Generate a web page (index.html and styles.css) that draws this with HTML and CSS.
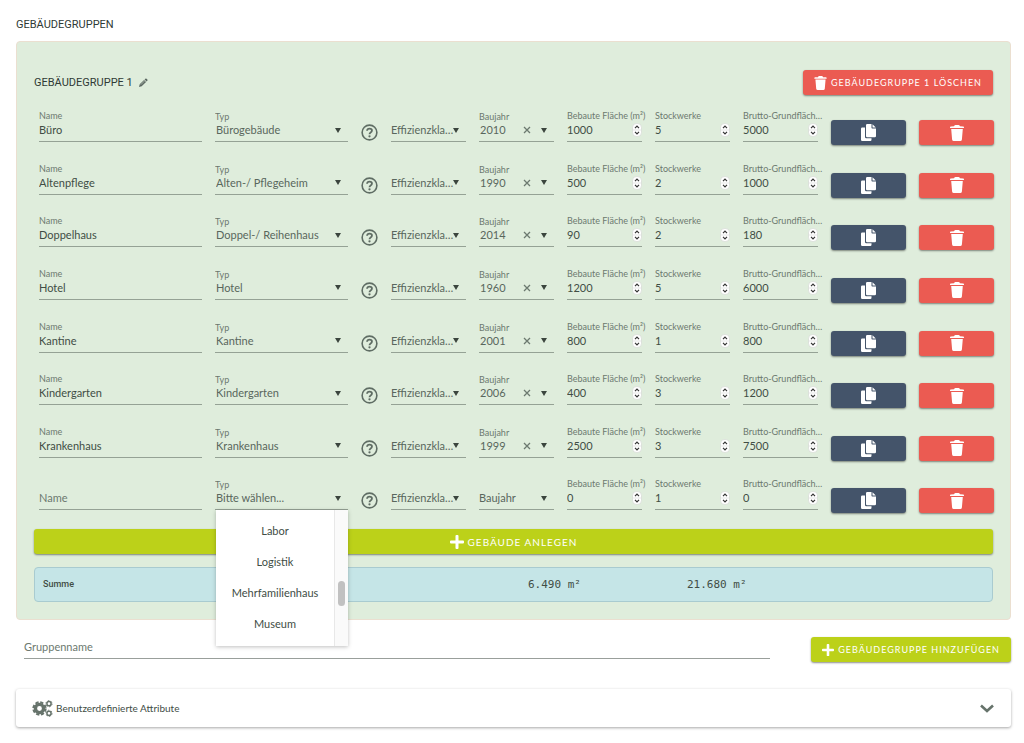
FILE: index.html
```html
<!DOCTYPE html>
<html lang="de">
<head>
  <meta charset="utf-8">
  <meta name="viewport" content="width=device-width, initial-scale=1">
  <title>Gebäudegruppen</title>
  <link rel="stylesheet" href="styles.css">
</head>
<body>
  <svg class="sprite" aria-hidden="true">
    <symbol id="i-trash" viewBox="0 0 14 16"><path d="M0 2.4Q0 1.6.8 1.5L4 1.3Q4.600 0 5.500 0H8.500Q9.400 0 10 1.300L13.200 1.500Q14 1.600 14 2.400V3H0ZM1.200 4H12.800L11.900 14.500Q11.700 16 10.300 16H3.700Q2.300 16 2.100 14.500Z"/></symbol>
    <symbol id="i-copy" viewBox="0 0 15 17"><path d="M6.200 0H10.500V3.800Q10.500 4.500 11.200 4.500H15V12Q15 13.200 13.800 13.200H6.200Q5 13.200 5 12V1.200Q5 0 6.200 0ZM11.500.2L14.800 3.500H11.500ZM1.200 3.600H4V13Q4 14.300 5.300 14.300H10.500V15.800Q10.500 17 9.300 17H1.200Q0 17 0 15.800V4.800Q0 3.600 1.200 3.600Z"/></symbol>
    <symbol id="i-plus" viewBox="0 0 14 14"><path d="M5.500 1Q5.500 0 6.400 0H7.600Q8.500 0 8.500 1V5.500H13Q14 5.500 14 6.400V7.600Q14 8.500 13 8.500H8.500V13Q8.500 14 7.600 14H6.400Q5.500 14 5.500 13V8.500H1Q0 8.500 0 7.600V6.400Q0 5.500 1 5.500H5.500Z"/></symbol>
    <symbol id="i-pencil" viewBox="0 0 10 10"><path d="M7 .8Q7.700.1 8.400.7L9.300 1.600Q9.900 2.300 9.200 3L8.400 3.800 6.200 1.600ZM5.600 2.200L7.800 4.400 3 9.200 0 10 .8 7Z"/><path d="M2 7.400L6 3.400" fill="none" stroke="#dfeddc" stroke-width=".6"/></symbol>
    <symbol id="i-help" viewBox="0 0 18 18"><g fill="none" stroke="currentColor" stroke-width="1.700"><circle cx="9" cy="9" r="7.800"/><path d="M6.400 7.100Q6.600 4.800 9 4.800Q11.600 4.800 11.600 6.900Q11.600 8 10.200 8.900Q9 9.600 9 10.900" stroke-width="1.900"/></g><circle cx="9" cy="13.100" r="1.200"/></symbol>
    <symbol id="i-caret" viewBox="0 0 6 5"><path d="M0 0H6L3 5Z"/></symbol>
    <symbol id="i-close" viewBox="0 0 8 8"><path d="M1 1L7 7M7 1L1 7" fill="none" stroke="currentColor" stroke-width="1.300"/></symbol>
    <symbol id="i-spin" viewBox="0 0 10 14"><rect x=".5" y=".5" width="9" height="13" rx="4" fill="#fff" stroke="#d4d9d3" stroke-width=".7"/><path d="M1 7H9" stroke="#ddd" stroke-width=".7"/><path d="M3 5.200L5 3.200 7 5.200M3 8.800L5 10.800 7 8.800" fill="none" stroke="#333" stroke-width="1.200"/></symbol>
    <symbol id="i-cogs" viewBox="0 0 21 17"><g fill="none" stroke="currentColor"><circle cx="7.500" cy="8.500" r="4.100" stroke-width="3.400"/><circle cx="7.500" cy="8.500" r="6.200" stroke-width="2" stroke-dasharray="3.200 1.669"/><circle cx="17" cy="3.700" r="2.100" stroke-width="1.500"/><circle cx="17" cy="3.700" r="3.100" stroke-width=".9" stroke-dasharray="1.500 1.746"/><circle cx="17" cy="13.300" r="2.100" stroke-width="1.500"/><circle cx="17" cy="13.300" r="3.100" stroke-width=".9" stroke-dasharray="1.500 1.746"/></g></symbol>
    <symbol id="i-chevron" viewBox="0 0 14 9"><path d="M1 1.500L7 7 13 1.500" fill="none" stroke="currentColor" stroke-width="2.600"/></symbol>
  </svg>

  <main class="page">
    <h1 class="heading">GEBÄUDEGRUPPEN</h1>

    <section class="group">
      <header class="group-head">
        <h2 class="heading">GEBÄUDEGRUPPE 1</h2>
        <button class="icon-btn" type="button" aria-label="Umbenennen"><svg class="pencil"><use href="#i-pencil"/></svg></button>
        <button class="btn danger push" type="button"><svg class="trash"><use href="#i-trash"/></svg>GEBÄUDEGRUPPE 1 LÖSCHEN</button>
      </header>
      <div class="rows" id="rows"></div>
      <button class="btn add wide" type="button"><svg class="plus"><use href="#i-plus"/></svg>GEBÄUDE ANLEGEN</button>
      <div class="sum">
        <span class="sum-label">Summe</span>
        <span class="sum-value">6.490 m²</span>
        <span class="sum-value">21.680 m²</span>
      </div>
    </section>

    <form class="new-group">
      <input class="group-name" type="text" placeholder="Gruppenname" aria-label="Gruppenname">
      <button class="btn add" type="button"><svg class="plus-small"><use href="#i-plus"/></svg>GEBÄUDEGRUPPE HINZUFÜGEN</button>
    </form>

    <button class="panel" type="button">
      <svg class="cogs"><use href="#i-cogs"/></svg>
      <span>Benutzerdefinierte Attribute</span>
      <svg class="chevron"><use href="#i-chevron"/></svg>
    </button>
  </main>
  <script src="rows.js"></script>
</body>
</html>
```
FILE: styles.css
```css
* { box-sizing: border-box; }

body {
  margin: 0;
  background: #fff;
  color: #414d45;
  font: 11px/16px Lato, "Open Sans", sans-serif;
}

button, input, select {
  margin: 0;
  padding: 0;
  border: 0;
  border-radius: 0;
  background: none;
  color: inherit;
  font: inherit;
}

button { cursor: pointer; }
svg { display: block; flex: none; fill: currentColor; }
.sprite { position: absolute; width: 0; height: 0; }

.page { padding: 17px 13px 16px 16px; }

.heading {
  margin: 0;
  color: #2f3a35;
  font: 400 11px/16px Roboto, sans-serif;
}

.group {
  margin-top: 8px;
  padding: 28px 17px 17px;
  border: 1px solid #ebdfd0;
  border-radius: 4px;
  background: #dfeddc;
}

.group-head { display: flex; align-items: center; gap: 6px; }
.push { margin-left: auto; }
.icon-btn { color: #5d6963; }
.pencil { width: 9px; height: 9px; }

.btn {
  display: flex;
  align-items: center;
  justify-content: center;
  height: 25px;
  padding: 0 11px;
  border-radius: 3px;
  color: #fff;
  font-size: 9px;
  letter-spacing: 1px;
  white-space: nowrap;
  box-shadow: 0 1px 2px rgba(0, 0, 0, .45);
}

.danger { gap: 4px; background: #eb5b52; }
.copy { background: #44546a; }
.add { gap: 4px; background: #bcd119; }
.wide { width: 100%; margin-top: 3px; font-size: 10px; }
.trash { width: 13px; height: 14px; }
.row .trash { width: 14px; height: 16px; }
.docs { width: 15px; height: 17px; }
.plus { width: 14px; height: 14px; }
.plus-small { width: 12px; height: 12px; }

.rows {
  display: grid;
  grid-auto-rows: 1fr;
  min-height: 421px;
  margin: 10px -1px 0 5px;
}

.row {
  display: grid;
  grid-template-columns: minmax(0, 163fr) minmax(0, 133fr) 17px repeat(7, minmax(0, 75fr));
  column-gap: 13px;
  align-items: start;
}

.row > .btn { margin-top: 15px; padding: 0; }

.help { margin-top: 19px; color: #5f6d64; }
.help svg { width: 17px; height: 17px; }

.field {
  position: relative;
  display: flex;
  flex-direction: column;
  height: 37px;
  padding-top: 4px;
  border-bottom: 1px solid #95a295;
}

.caption {
  overflow: hidden;
  height: 13px;
  margin-right: -6px;
  color: #6c796f;
  font-size: 9px;
  line-height: 13px;
  text-overflow: ellipsis;
  white-space: nowrap;
}

.control {
  display: grid;
  grid-template-columns: minmax(0, 1fr) auto auto;
  align-items: center;
  height: 16px;
}

.control input { width: 100%; height: 16px; outline: 0; }
.control input::placeholder { color: #6c796f; opacity: 1; }

.control select {
  grid-area: 1 / 1 / 2 / 4;
  width: 100%;
  height: 16px;
  padding: 0 12px 0 0;
  color: #59675d;
  text-overflow: ellipsis;
  appearance: none;
}

.control .caret {
  grid-area: 1 / 3;
  width: 6px;
  height: 5px;
  margin-right: 7px;
  color: #3b453e;
  pointer-events: none;
}

.picker { padding-top: 6px; }
.picker .caption { height: 12px; line-height: 12px; }
.picker .control, .picker .control select { height: 14px; line-height: 14px; }
.picker .control select { padding-left: 1px; }
.empty { padding-top: 17px; }

.clear { z-index: 1; grid-area: 1 / 2; margin-right: 10px; color: #6c796f; }
.clear svg { width: 8px; height: 8px; }

.control input[type="number"] { grid-area: 1 / 1 / 2 / 4; appearance: textfield; }
input[type="number"]::-webkit-inner-spin-button { margin: 0; appearance: none; }
.spin { grid-area: 1 / 3; width: 10px; height: 14px; pointer-events: none; }

.menu {
  position: absolute;
  z-index: 2;
  top: 100%;
  right: 0;
  left: 1px;
  display: flex;
  height: 136px;
  margin-top: 1px;
  background: #fff;
  box-shadow: 0 1px 4px rgba(0, 0, 0, .25);
}

.menu ul {
  flex: 1;
  margin: 0;
  padding: 5px 0 0;
  list-style: none;
  text-align: center;
}

.menu li { line-height: 31px; }
.track { width: 14px; padding: 71px 3px 0; border-left: 1px solid #e8e8e8; background: #fafafa; }
.thumb { height: 25px; border-radius: 4px; background: #c1c1c1; }

.sum {
  display: grid;
  grid-template-columns: 485fr 159fr 297fr;
  align-items: center;
  height: 35px;
  margin-top: 13px;
  padding: 0 8px;
  border: 1px solid #a9cbd0;
  border-radius: 4px;
  background: #c5e5e7;
}

.sum-label { padding-bottom: 2px; font: 500 9px/16px Roboto, sans-serif; }
.sum-value { font-family: "DejaVu Sans Mono", monospace; }

.new-group { display: flex; align-items: flex-start; gap: 41px; margin-top: 17px; padding-left: 8px; }
.group-name { flex: 1; min-width: 0; height: 22px; padding-bottom: 2px; border-bottom: 1px solid #999f9b; outline: 0; }
.group-name::placeholder { color: #6c796f; opacity: 1; }

.panel {
  display: flex;
  align-items: center;
  gap: 3px;
  width: 100%;
  height: 38px;
  margin-top: 27px;
  padding: 0 17px 0 16px;
  border-radius: 3px;
  font-size: 10px;
  box-shadow: 0 1px 3px rgba(0, 0, 0, .35);
}

.cogs { width: 21px; height: 17px; color: #66736b; }
.chevron { width: 14px; height: 9px; margin-left: auto; color: #66736b; }
```
FILE: rows.js
```js
const buildings = [
  ["Büro", "Bürogebäude", "2010", 1000, 5, 5000],
  ["Altenpflege", "Alten-/ Pflegeheim", "1990", 500, 2, 1000],
  ["Doppelhaus", "Doppel-/ Reihenhaus", "2014", 90, 2, 180],
  ["Hotel", "Hotel", "1960", 1200, 5, 6000],
  ["Kantine", "Kantine", "2001", 800, 1, 800],
  ["Kindergarten", "Kindergarten", "2006", 400, 3, 1200],
  ["Krankenhaus", "Krankenhaus", "1999", 2500, 3, 7500],
  ["", "Bitte wählen...", "", 0, 1, 0]
];

const icon = (name, cls) => `<svg class="${cls}" aria-hidden="true"><use href="#i-${name}"/></svg>`;

const numberField = (id, label, value) => `
  <div class="field">
    <label class="caption" for="${id}">${label}</label>
    <div class="control"><input id="${id}" type="number" value="${value}">${icon("spin", "spin")}</div>
  </div>`;

const menu = `
  <div class="menu">
    <ul role="listbox" aria-label="Typ">
      <li role="option">Labor</li>
      <li role="option">Logistik</li>
      <li role="option">Mehrfamilienhaus</li>
      <li role="option">Museum</li>
    </ul>
    <div class="track"><div class="thumb"></div></div>
  </div>`;

document.getElementById("rows").innerHTML = buildings.map(([name, type, year, area, floors, gross], i) => `
  <div class="row">
    <div class="field${name ? "" : " empty"}">
      ${name ? `<label class="caption" for="name${i}">Name</label>` : ""}
      <div class="control"><input id="name${i}" type="text" value="${name}" placeholder="Name" aria-label="Name"></div>
    </div>
    <div class="field picker">
      <label class="caption" for="type${i}">Typ</label>
      <div class="control"><select id="type${i}"><option>${type}</option></select>${icon("caret", "caret")}</div>
      ${name ? "" : menu}
    </div>
    <button class="help" type="button" aria-label="Hilfe">${icon("help", "")}</button>
    <div class="field empty">
      <div class="control"><select aria-label="Effizienzklasse"><option>Effizienzklasse</option></select>${icon("caret", "caret")}</div>
    </div>
    <div class="field ${year ? "picker" : "empty"}">
      ${year ? `<label class="caption" for="year${i}">Baujahr</label>` : ""}
      <div class="control">
        <select id="year${i}" aria-label="Baujahr"><option>${year || "Baujahr"}</option></select>
        ${year ? `<button class="clear" type="button" aria-label="Leeren">${icon("close", "")}</button>` : ""}
        ${icon("caret", "caret")}
      </div>
    </div>
    ${numberField("area" + i, "Bebaute Fläche (m²)", area)}
    ${numberField("floors" + i, "Stockwerke", floors)}
    ${numberField("gross" + i, "Brutto-Grundfläche (m²)", gross)}
    <button class="btn copy" type="button" aria-label="Kopieren">${icon("copy", "docs")}</button>
    <button class="btn danger" type="button" aria-label="Löschen">${icon("trash", "trash")}</button>
  </div>`).join("");
```
